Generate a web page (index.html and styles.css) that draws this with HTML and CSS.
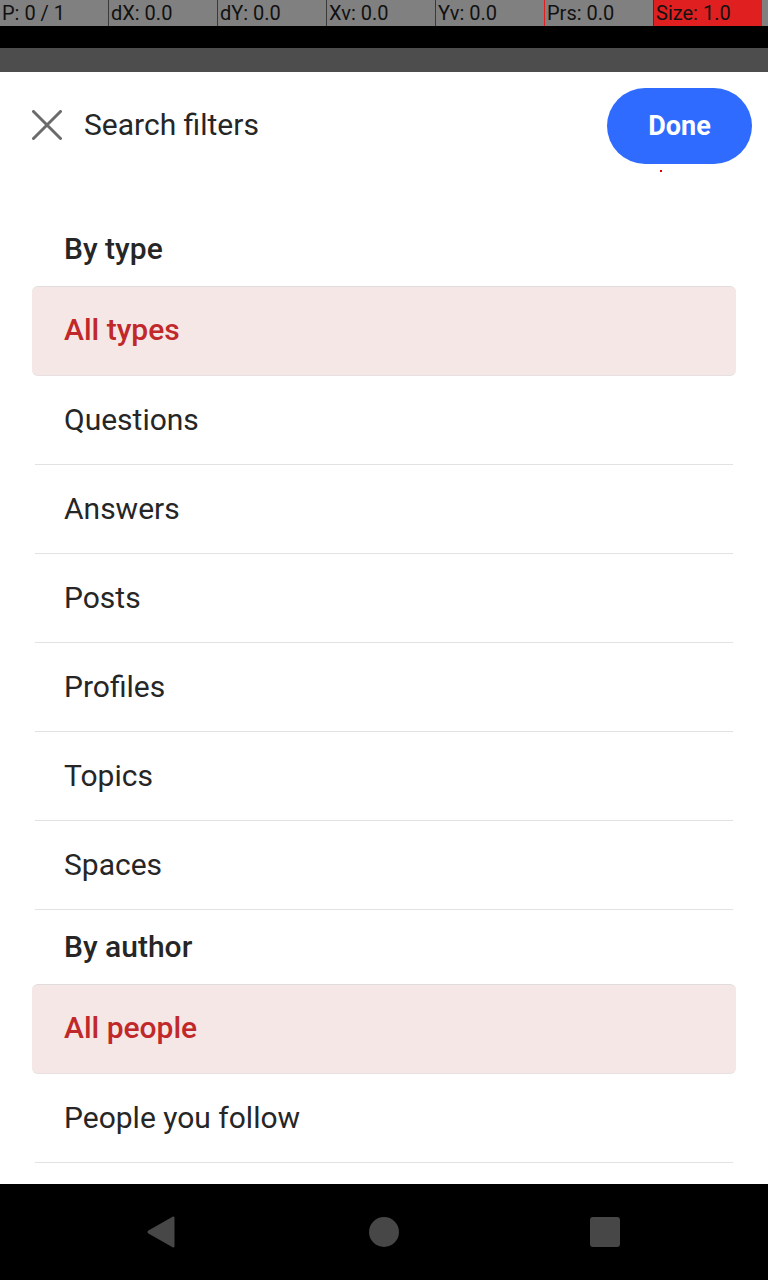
FILE: index.html
```html
<!DOCTYPE html>
<html>
<head>
<meta charset="utf-8">
<link rel="stylesheet" href="styles.css">
</head>
<body>
<div class="debug-bar">
  <div class="cell">P: 0 / 1</div>
  <div class="cell">dX: 0.0</div>
  <div class="cell">dY: 0.0</div>
  <div class="cell">Xv: 0.0</div>
  <div class="cell red-edge">Yv: 0.0</div>
  <div class="cell">Prs: 0.0</div>
  <div class="cell hot">Size: 1.0</div>
</div>
<div class="status-strip"></div>
<div class="app-strip"></div>
<main class="sheet">
  <header class="sheet-header">
    <div class="title-group">
      <svg class="close-icon" width="30" height="30" viewBox="0 0 30 30" aria-hidden="true">
        <path d="M1.5 1.5 L28.5 28.5 M28.5 1.5 L1.5 28.5" stroke="#6b6b6b" stroke-width="3" stroke-linecap="round" fill="none"/>
      </svg>
      <span class="title">Search filters</span>
    </div>
    <button class="done">Done</button>
    <span class="touch-dot"></span>
  </header>
  <section class="filters">
    <div class="group-title first">By type</div>
    <div class="option selected">All types</div>
    <div class="option">Questions</div>
    <div class="option">Answers</div>
    <div class="option">Posts</div>
    <div class="option">Profiles</div>
    <div class="option">Topics</div>
    <div class="option">Spaces</div>
    <div class="group-title">By author</div>
    <div class="option selected">All people</div>
    <div class="option">People you follow</div>
  </section>
</main>
<nav class="nav-bar">
  <svg width="30" height="34" viewBox="0 0 30 34" class="nav-back" aria-hidden="true">
    <path d="M27 1.5 Q28.5 1 28.5 3 L28.5 31 Q28.5 33 27 32.5 L2 18.2 Q0.8 17 2 15.8 Z" fill="#474747"/>
  </svg>
  <span class="nav-home"></span>
  <span class="nav-recent"></span>
</nav>
</body>
</html>
```
FILE: styles.css
```css
* { box-sizing: border-box; }
html, body { margin: 0; padding: 0; }
body {
  width: 768px;
  height: 1280px;
  overflow: hidden;
  background: #fff;
  font-family: Roboto, "Noto Sans", sans-serif;
  display: flex;
  flex-direction: column;
}
.debug-bar {
  height: 26px;
  background: #808080;
  display: flex;
  flex: none;
}
.cell {
  width: 109px;
  height: 26px;
  border-right: 1px solid #3a3a3a;
  font-size: 20px;
  line-height: 27px;
  padding-left: 2px;
  color: #111;
  white-space: nowrap;
  overflow: hidden;
}
.cell.red-edge { border-right-color: #e02020; }
.cell.hot { background: #e02020; width: 108px; border-right: none; }
.status-strip { height: 22px; background: #000; flex: none; }
.app-strip { height: 24px; background: #4d4d4d; flex: none; }
.sheet {
  flex: 1;
  overflow: hidden;
  background: #fff;
}
.sheet-header {
  position: relative;
  display: flex;
  align-items: center;
  justify-content: space-between;
  padding: 16px 16px 46px 32px;
}
.title-group {
  display: flex;
  align-items: center;
  gap: 22px;
  margin-top: -3px;
}
.close-icon { display: block; }
.title {
  font-size: 30px;
  color: #262626;
}
.done {
  width: 145px;
  height: 76px;
  border: none;
  border-radius: 38px;
  background: #2f6bff;
  color: #fff;
  font-family: Roboto, sans-serif;
  font-weight: 700;
  font-size: 27px;
  padding: 0;
}
.touch-dot {
  position: absolute;
  left: 660px;
  top: 98px;
  width: 2px;
  height: 2px;
  background: #e00000;
}
.filters {
  margin: 0 32px;
  display: flex;
  flex-direction: column;
}
.group-title {
  height: 74px;
  display: flex;
  align-items: center;
  padding-left: 32px;
  padding-bottom: 1px;
  font-size: 30px;
  font-weight: 500;
  color: #262626;
}
.group-title.first { height: 76px; padding-bottom: 0; }
.option {
  height: 89px;
  display: flex;
  align-items: center;
  padding-left: 29px;
  padding-bottom: 2px;
  font-size: 30px;
  color: #262626;
  margin: 0 3px;
  border-bottom: 1px solid #e2e2e2;
}
.option.selected {
  margin: 0;
  height: 90px;
  padding-left: 32px;
  padding-bottom: 3px;
  background: #f6e7e7;
  color: #c0282a;
  font-weight: 500;
  border-top: 1px solid #e0dcdd;
  border-bottom: 1px solid #e6e0e1;
  border-radius: 6px;
}
.nav-bar {
  height: 96px;
  flex: none;
  background: #000;
  display: flex;
  align-items: center;
  padding-left: 146px;
}
.nav-back { display: block; }
.nav-home {
  width: 30px;
  height: 30px;
  border-radius: 50%;
  background: #474747;
  margin-left: 193px;
}
.nav-recent {
  width: 30px;
  height: 30px;
  border-radius: 3px;
  background: #474747;
  margin-left: 191px;
}
```
